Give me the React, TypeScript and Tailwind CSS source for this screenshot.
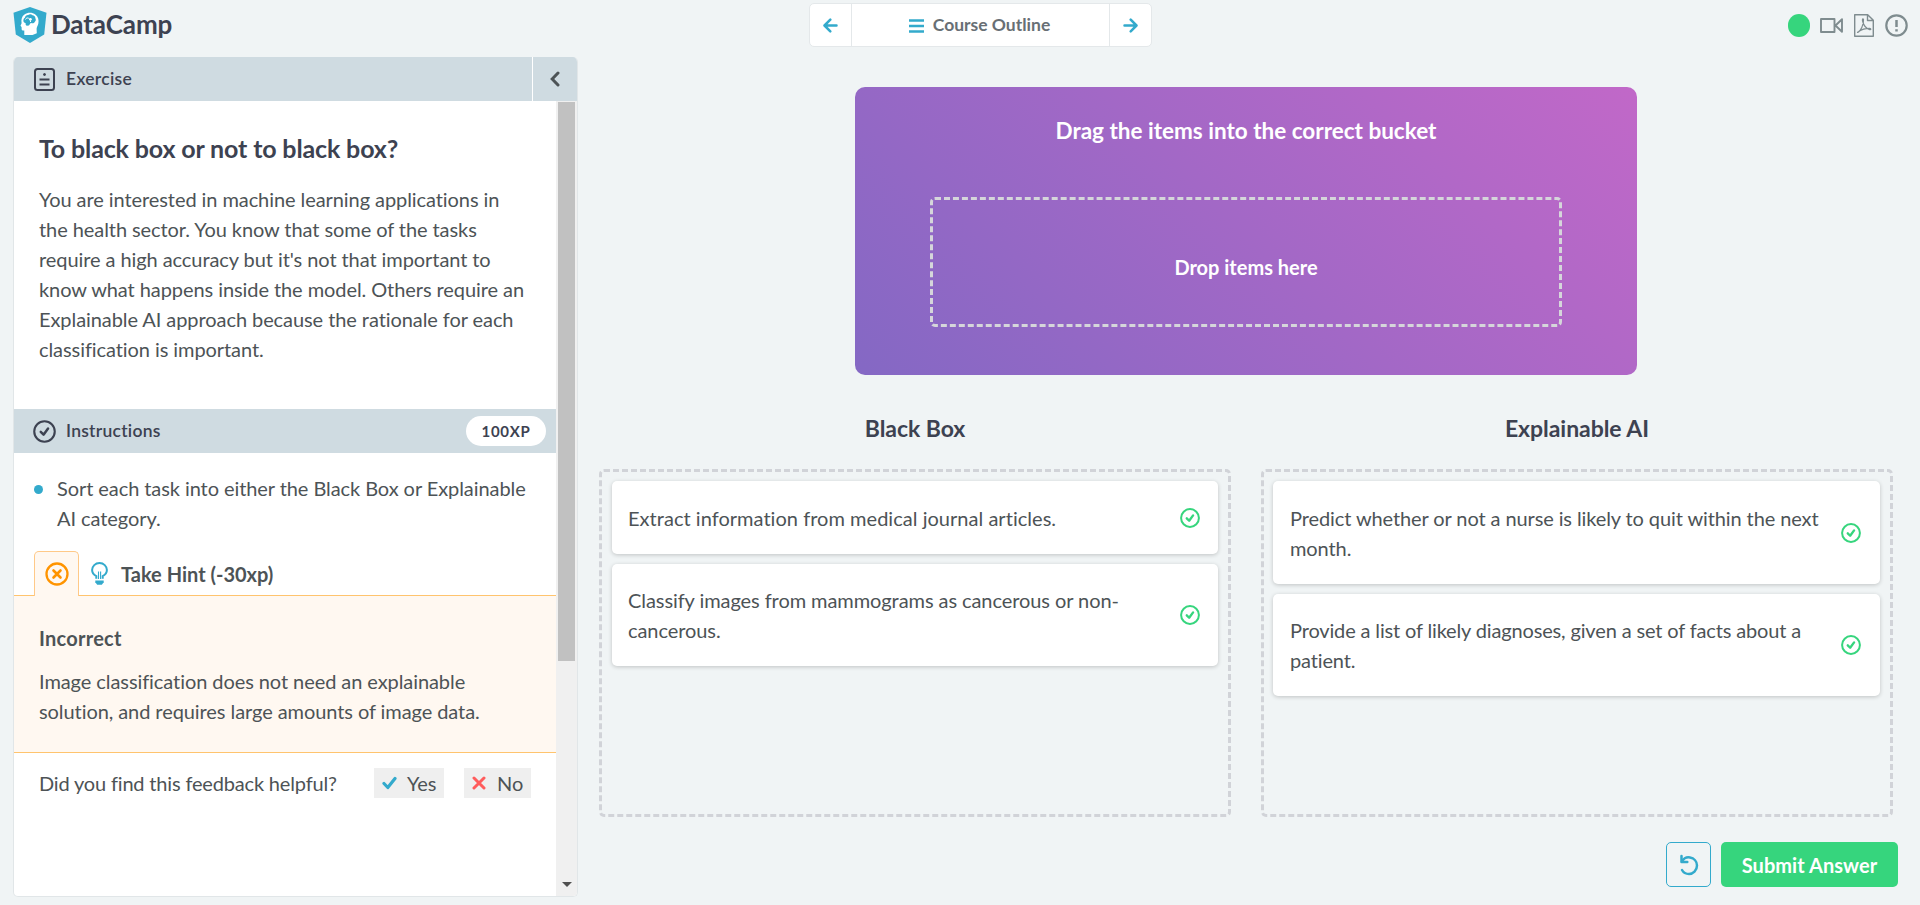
import React from "react";

const DARK = "text-[#3d4251]";
const BODY = "text-xl leading-[30px] tracking-[-0.075px] text-[#4d5356]";

function CheckCircle({ className, w }: { className: string; w: number }) {
  return (
    <svg viewBox="0 0 24 24" className={className} fill="none" stroke="currentColor" strokeWidth={w}>
      <circle cx="12" cy="12" r="10.7" />
      <path d="M8.100 12.400l2.900 2.900 4.700-6.400" strokeLinecap="round" strokeLinejoin="round" strokeWidth={w + 0.4} />
    </svg>
  );
}

function Logo() {
  return (
    <svg viewBox="0 0 34 36" className="h-[36px] w-[34px]">
      <path d="M17 0 33.500 5.700 31.200 27.500 17 36 2.800 27.500.5 5.700z" fill="#33aacc" />
      <path
        d="M11.300 28v-4.500c-1.300.3-2.400 0-2.600-1-.2-1 .1-1.800-.2-2.600L7.500 18.700l1.100-2.500C8 12.500 8.800 9.300 11.500 7.500c3-2.200 7.800-2.300 10.800 0 2.900 2.200 3.800 5.700 3 9.200-.4 1.900-1.600 3.200-1.700 5l.2 4.500L19.500 28z"
        fill="#fff"
      />
      <path
        d="M13.800 18.800c-1.200-.4-1.300-1.600-1.100-2.500-1.700-.4-2.600-1.700-2.300-3.300.2-1.200.9-1.800 1.500-2.200.2-2 1.700-3 3.300-2.900 1.400-1 3.300-.8 4.300.4 1.700.1 2.900 1.300 2.900 2.900.7 1.200.5 2.700-.5 3.600-.8 1.400-2.200 1.800-3.700 1.300-1.200 0-1.300 1.800-2.300 2.500z"
        fill="#33aacc"
      />
      <path d="M12.500 12.500c.8-1.800 2-1.800 3.300-1.200M17.500 13.500v1.500" stroke="#fff" strokeWidth="1" fill="none" />
      <circle cx="17.400" cy="12.300" r="1.400" fill="#fff" />
    </svg>
  );
}

function Item({ text, className }: { text: string; className: string }) {
  return (
    <div className={"flex items-center justify-between rounded-[5px] bg-white shadow-[0_1px_4px_rgba(0,0,0,0.2)] " + className}>
      <p className={"w-[540px] " + BODY}>{text}</p>
      <CheckCircle className="h-5 w-5 shrink-0 text-[#36d57d]" w={2.4} />
    </div>
  );
}

function Bucket({ title, pad, children }: { title: string; pad: string; children: React.ReactNode }) {
  return (
    <div className="flex w-[632px] flex-col">
      <h3 className={"h-[94px] pt-[36px] text-center text-[23px] font-bold leading-[34px] tracking-[-0.05px] " + DARK}>{title}</h3>
      <div className={"flex h-[348px] flex-col gap-[10px] rounded-[5px] border-[3px] border-dashed border-[#d1d3d8] pt-[9px] pr-[10px] " + pad}>
        {children}
      </div>
    </div>
  );
}

export default function App() {
  return (
    <div className="flex h-[905px] w-[1920px] flex-col overflow-hidden bg-[#f0f4f5] font-['Lato',sans-serif]">
      <header className="flex h-[57px] shrink-0 items-start">
        <div className="flex w-[809px] items-start gap-[4px] pl-[13px]">
          <div className="pt-[7px]">
            <Logo />
          </div>
          <span className={"pt-[4px] text-[26px] font-bold leading-[40px] tracking-[-0.1px] " + DARK}>DataCamp</span>
        </div>
        <nav className="mt-[3px] flex h-[44px] w-[343px] rounded-[5px] border border-[#e4e8ea] bg-white">
          <button className="flex w-[42px] items-center justify-center border-r border-[#e4e8ea]">
            <svg viewBox="0 0 15 15" className="h-[15px] w-[15px]" fill="none" stroke="#33aacc" strokeWidth="2.5" strokeLinecap="round" strokeLinejoin="round">
              <path d="M13.500 7.500H1.600M7.300 1.700 1.500 7.500l5.800 5.800" />
            </svg>
          </button>
          <button className="flex flex-1 items-center justify-center gap-[9px] pr-[2px]">
            <svg viewBox="0 0 15 14" className="mt-px h-[14px] w-[15px]" stroke="#33aacc" strokeWidth="2.400">
              <path d="M0 1.500h15M0 7h15M0 12.500h15" />
            </svg>
            <span className="pt-px text-[17.500px] font-bold text-[#686f75]">Course Outline</span>
          </button>
          <button className="flex w-[42px] items-center justify-center border-l border-[#e4e8ea]">
            <svg viewBox="0 0 15 15" className="h-[15px] w-[15px]" fill="none" stroke="#33aacc" strokeWidth="2.5" strokeLinecap="round" strokeLinejoin="round">
              <path d="M1.500 7.500h11.900M7.700 1.700l5.800 5.800-5.800 5.800" />
            </svg>
          </button>
        </nav>
        <div className="ml-auto flex h-[51px] items-center pr-[12px]">
          <span className="h-[23px] w-[22px] rounded-full bg-[#36d57d]" />
          <svg viewBox="0 0 23 15" className="ml-[10px] h-[15px] w-[23px]" fill="none" stroke="#7f8c8f" strokeWidth="1.900" strokeLinejoin="round">
            <path d="M1 1h13.500v13H1zM15.500 7.500 22 1.200v12.600z" />
          </svg>
          <svg viewBox="0 0 20 23" className="ml-[11px] h-[23px] w-[20px]" fill="none" stroke="#7f8c8f" strokeWidth="1.400" strokeLinejoin="round">
            <path d="M.7.700h13l5.600 5.600v16H.7zM13.500.7v5.800h5.800" />
            <path d="M3.500 18.500c3-1 6.500-8 6-13-.8-1.500-1.500 0-.8 2 1 4 3.500 7 7 8.200 1.500.2 1.500-1.200 0-1.400-4 0-8 1-11 3.200-1 .6-1.200.8-1.200 1z" strokeWidth="1.200" />
          </svg>
          <svg viewBox="0 0 23 23" className="ml-[11px] h-[23px] w-[23px]" fill="none" stroke="#7f8c8f" strokeWidth="2.200">
            <circle cx="11.500" cy="11.500" r="10.200" />
            <path d="M11.500 6v7M11.500 15.300v2.200" strokeWidth="2.500" />
          </svg>
        </div>
      </header>

      <div className="flex flex-1">
        <aside className="ml-[13px] flex h-[840px] w-[565px] flex-col overflow-hidden rounded-[5px] border border-t-0 border-[#e1e6e8] bg-white">
          <div className="flex h-[44px] shrink-0 bg-[#cfdbe1]">
            <div className="flex flex-1 items-center gap-[11px] pl-[20px]">
              <svg viewBox="0 0 21 23" className="h-[23px] w-[21px]" fill="none" stroke="#3d4251" strokeWidth="2">
                <rect x="1" y="1" width="19" height="21" rx="2.500" />
                <path d="M5.500 11.500h10M5.500 16.500h10" />
                <circle cx="10.500" cy="6.500" r="1" fill="#3d4251" strokeWidth="1" />
              </svg>
              <h2 className={"text-[17.500px] font-semibold tracking-[0.3px] " + DARK}>Exercise</h2>
            </div>
            <button className="flex w-[45px] items-center justify-center border-l border-white">
              <svg viewBox="0 0 10 16" className="h-[16px] w-[10px]" fill="none" stroke="#4d5356" strokeWidth="3" strokeLinecap="round">
                <path d="M8 2 2.200 8 8 14" />
              </svg>
            </button>
          </div>
          <div className="flex flex-1">
            <div className="flex w-[542px] flex-col">
              <section className="h-[308px] pl-[25px] pt-[29px]">
                <h1 className={"text-[25px] font-bold leading-[36px] tracking-[-0.14px] " + DARK}>To black box or not to black box?</h1>
                <p className={"mt-[18px] w-[490px] " + BODY}>
                  You are interested in machine learning applications in the health sector. You know that some of the tasks require a high accuracy but it's not that important to know what happens inside the model. Others require an Explainable AI approach because the rationale for each classification is important.
                </p>
              </section>
              <div className="flex h-[44px] items-center gap-[10px] bg-[#cfdbe1] pl-[19px] pr-[10px]">
                <CheckCircle className="h-[23px] w-[23px] text-[#3d4251]" w={2.2} />
                <h2 className={"text-[17.500px] font-semibold tracking-[0.25px] " + DARK}>Instructions</h2>
                <span className={"ml-auto flex h-[30px] w-[80px] items-center justify-center rounded-full bg-white text-[15px] font-bold tracking-[0.7px] " + DARK}>100XP</span>
              </div>
              <div className="flex h-[98px] items-start pl-[20px] pt-[20px]">
                <span className="mt-[12px] h-[9px] w-[9px] shrink-0 rounded-full bg-[#33aacc]" />
                <p className={"ml-[14px] w-[480px] " + BODY}>Sort each task into either the Black Box or Explainable AI category.</p>
              </div>
              <div className="z-10 flex h-[45px] items-center pl-[20px]">
                <div className="flex h-full w-[45px] items-center justify-center rounded-t-[5px] border border-b-0 border-[#ffc988] bg-[#fff8f1]">
                  <svg viewBox="0 0 24 24" className="h-[24px] w-[24px]" fill="none" stroke="#ff9400" strokeWidth="2.300">
                    <circle cx="12" cy="12" r="10.500" />
                    <path d="M8.500 8.500l7 7M15.500 8.500l-7 7" strokeWidth="2.600" strokeLinecap="round" />
                  </svg>
                </div>
                <svg viewBox="0 0 17 23" className="ml-[12px] h-[23px] w-[17px]" fill="none" stroke="#33aacc" strokeWidth="2">
                  <path d="M5.300 16.800v-2.600C2.800 12.800 1.100 10.800 1.100 8.100 1.100 4.200 4.300 1.100 8.500 1.100s7.400 3.100 7.400 7c0 2.700-1.700 4.700-4.200 6.100v2.600" />
                  <path d="M7.500 17V9.500M9.600 17V9.500" strokeWidth="1.100" />
                  <path d="M4.300 18.500h8.400v1.700L10.800 22.700H6.200L4.300 20.200z" fill="#33aacc" stroke="none" />
                </svg>
                <span className="ml-[13px] text-xl font-bold text-[#4d5356]">Take Hint (-30xp)</span>
              </div>
              <section className="-mt-px h-[158px] border-y border-[#ffc46e] bg-[#fff8f1] pl-[25px] pt-[27px]">
                <h3 className="text-xl font-bold leading-[30px] tracking-[0.25px] text-[#4d5356]">Incorrect</h3>
                <p className={"mt-[13px] w-[480px] " + BODY}>Image classification does not need an explainable solution, and requires large amounts of image data.</p>
              </section>
              <div className={"mt-[15px] flex h-[30px] items-center pl-[25px] " + BODY}>
                <span className="w-[335px] tracking-[-0.17px]">Did you find this feedback helpful?</span>
                <button className="flex h-[30px] w-[70px] items-center gap-[10px] bg-[#efefef] pl-[8px]">
                  <svg viewBox="0 0 15 14" className="h-[14px] w-[15px]" fill="none" stroke="#33aacc" strokeWidth="3.200" strokeLinecap="round" strokeLinejoin="round">
                    <path d="M2 7.500 5.800 11.500 13 2.500" />
                  </svg>
                  Yes
                </button>
                <button className="ml-[20px] flex h-[30px] w-[67px] items-center gap-[11px] bg-[#efefef] pl-[8px]">
                  <svg viewBox="0 0 14 14" className="h-[14px] w-[14px]" fill="none" stroke="#ff5c5c" strokeWidth="3" strokeLinecap="round">
                    <path d="M2 2l10 10M12 2 2 12" />
                  </svg>
                  No
                </button>
              </div>
            </div>
            <div className="flex flex-1 flex-col items-center justify-between bg-[#f0f0f0] pb-[9px] pt-px">
              <div className="h-[559px] w-[17px] bg-[#c1c1c1]" />
              <div className="h-0 w-0 border-x-[5px] border-t-[5px] border-x-transparent border-t-[#505050]" />
            </div>
          </div>
        </aside>

        <main className="flex flex-1 flex-col pl-[21px]">
          <div className="flex w-[1294px] justify-center pt-[30px]">
            <div className="flex h-[288px] w-[782px] flex-col items-center rounded-[10px] bg-[linear-gradient(45deg,#8468c4,#c168c8)] text-white">
              <h2 className="mt-[27px] text-[22.500px] font-bold leading-[34px]">Drag the items into the correct bucket</h2>
              <div className="mt-[49px] flex h-[130px] w-[632px] items-center justify-center rounded-[5px] border-[3px] border-dashed border-[#d5d6da] pt-[10px] text-xl font-bold">Drop items here</div>
            </div>
          </div>
          <div className="flex gap-[30px]">
            <Bucket title="Black Box" pad="pl-[10px]">
              <Item text="Extract information from medical journal articles." className="h-[73px] pl-4 pr-[18px] [&>p]:tracking-[0.03px]" />
              <Item text="Classify images from mammograms as cancerous or non-cancerous." className="h-[102px] pl-4 pr-[18px]" />
            </Bucket>
            <Bucket title="Explainable AI" pad="pl-[9px]">
              <Item text="Predict whether or not a nurse is likely to quit within the next month." className="h-[103px] pl-[17px] pr-[19px] [&>p]:tracking-[-0.1px]" />
              <Item text="Provide a list of likely diagnoses, given a set of facts about a patient." className="h-[102px] pl-[17px] pr-[19px] [&>p]:tracking-[-0.15px]" />
            </Bucket>
          </div>
          <div className="mt-[25px] flex justify-end gap-[10px] pr-[22px]">
            <button className="flex h-[45px] w-[45px] items-center justify-center rounded-[5px] border border-[#33aacc]">
              <svg viewBox="0 0 20 22" className="h-[22px] w-[20px]" fill="none" stroke="#33aacc" strokeWidth="2.500" strokeLinecap="round" strokeLinejoin="round">
                <path d="M2.500 2v6h5.800" />
                <path d="M3 7.500C5 4 8 3 11 3.500c4 .7 7 4 7 8 0 5-4 8.500-8 8.500-3 0-5.500-1.300-7-4" />
              </svg>
            </button>
            <button className="h-[45px] w-[177px] rounded-[5px] bg-[#36d57d] pt-px text-xl font-bold tracking-[0.05px] text-white">Submit Answer</button>
          </div>
        </main>
      </div>
    </div>
  );
}
